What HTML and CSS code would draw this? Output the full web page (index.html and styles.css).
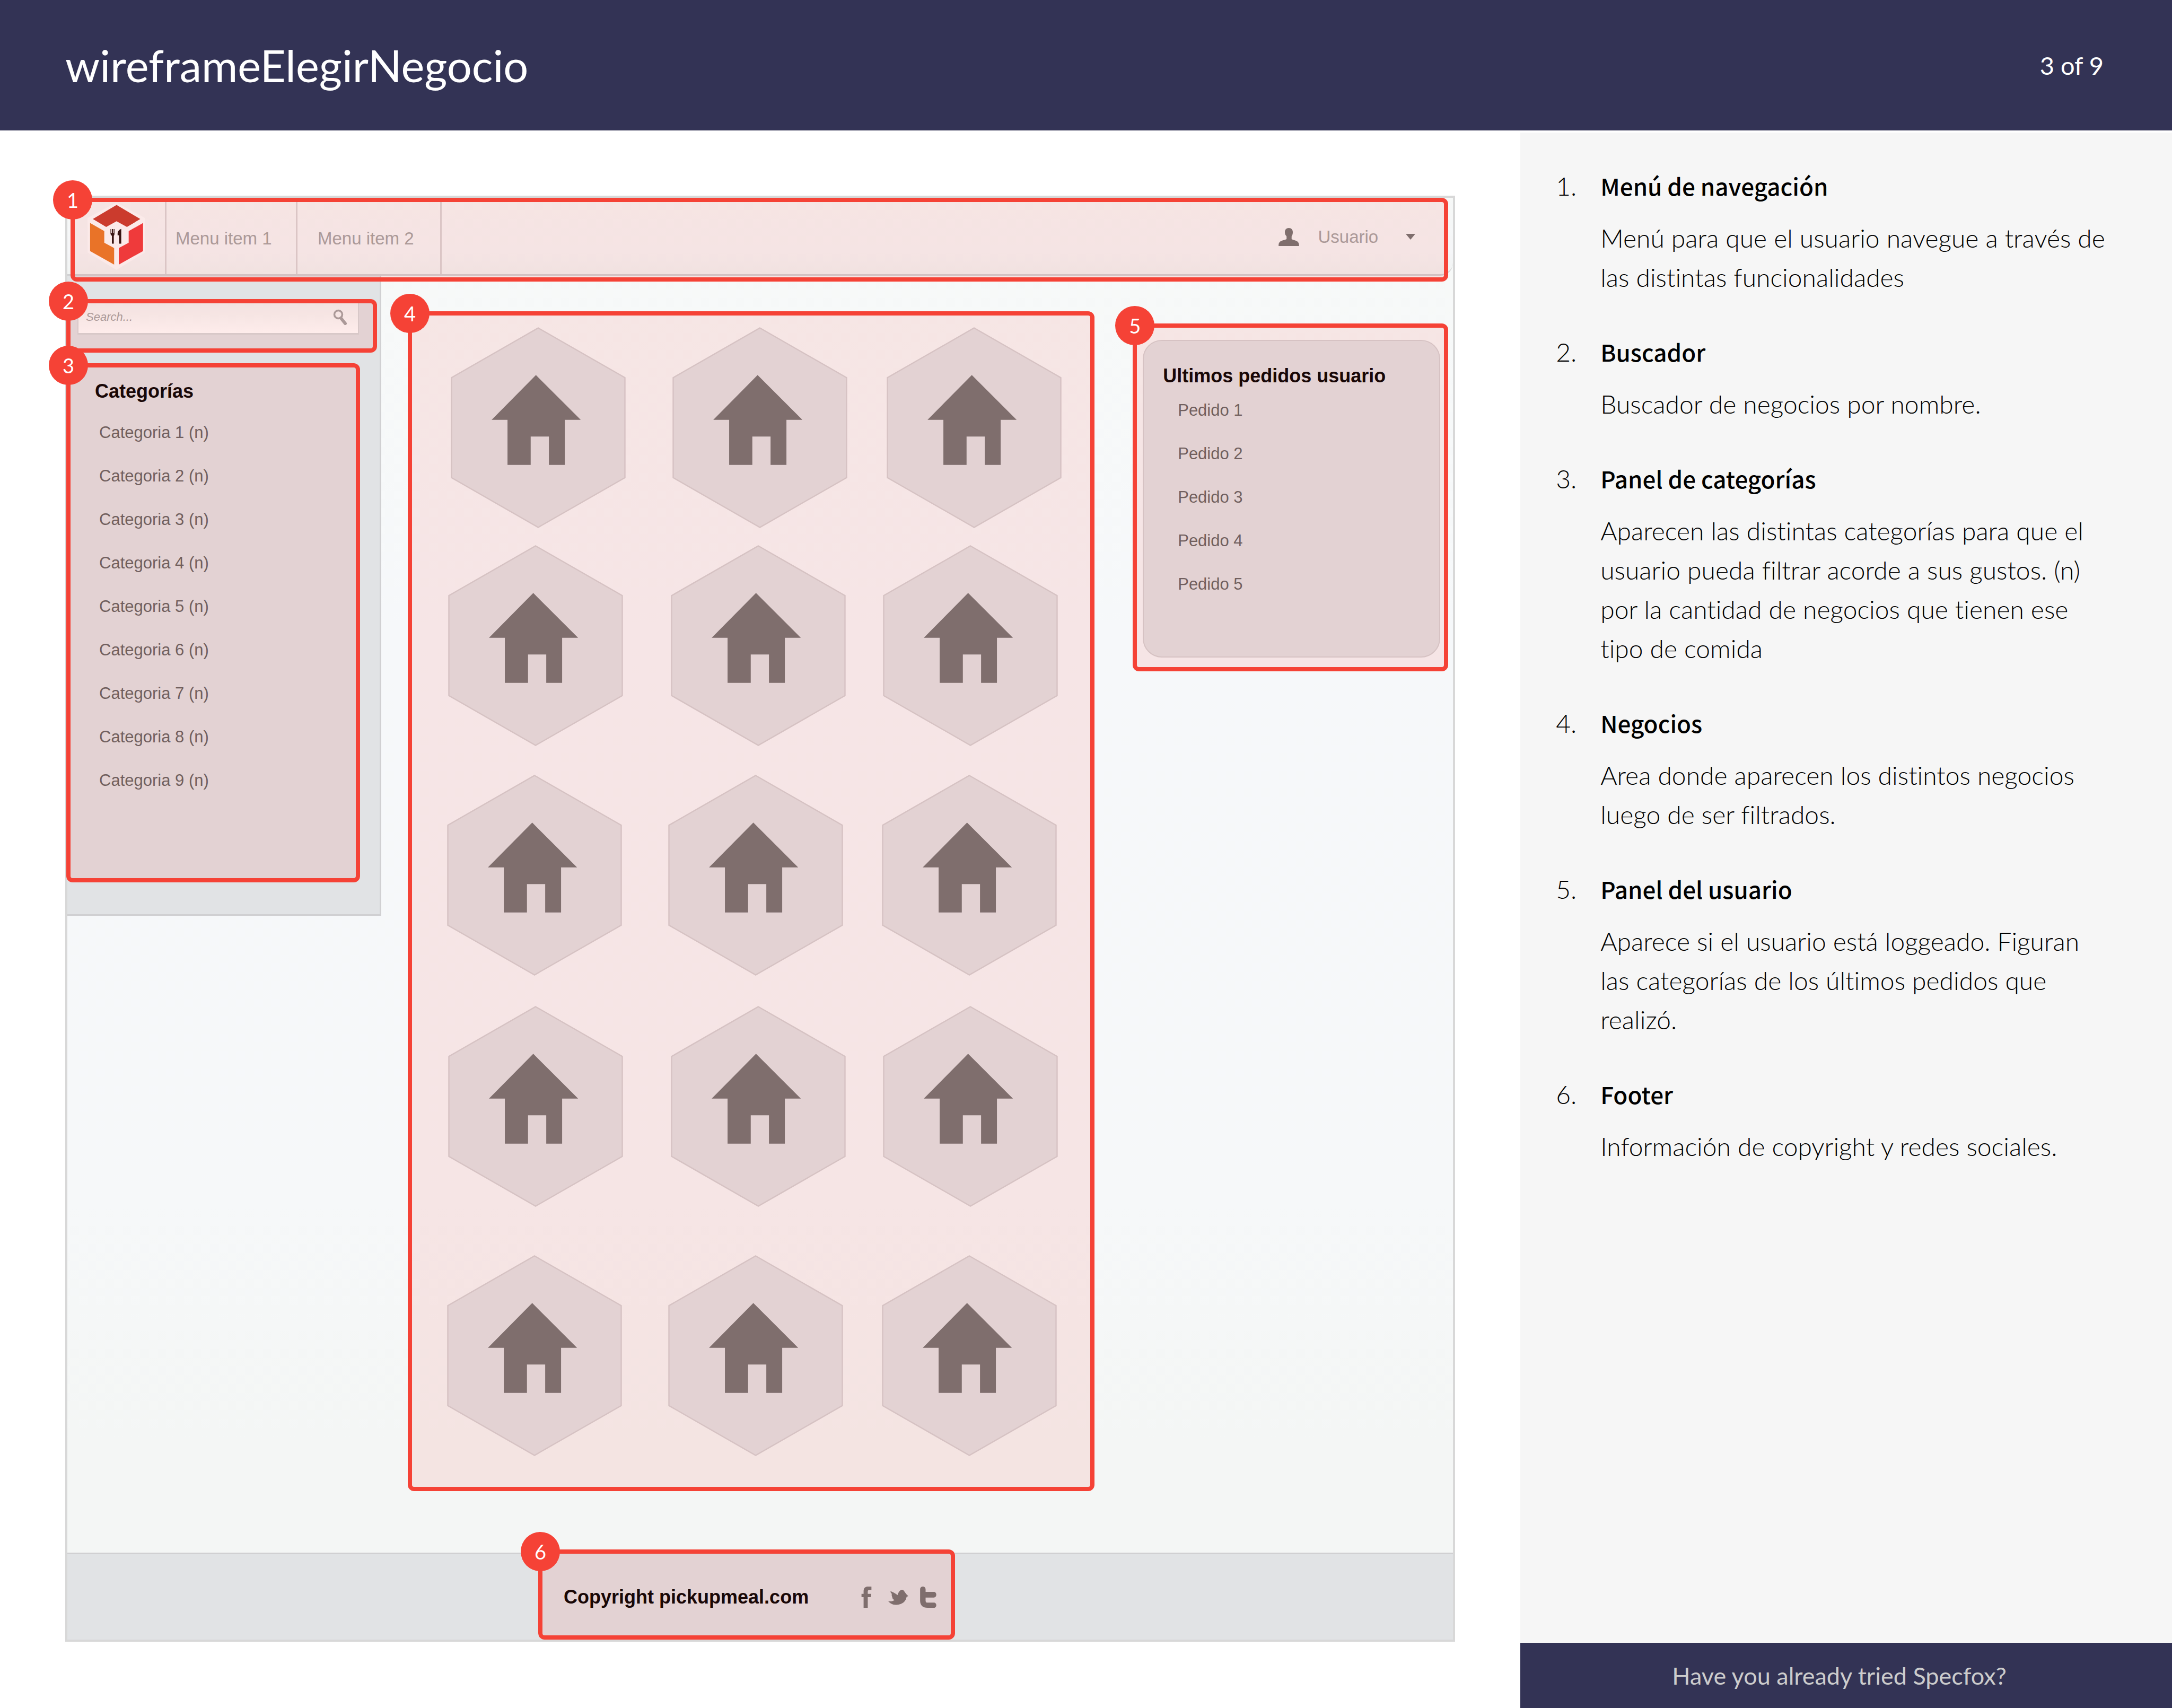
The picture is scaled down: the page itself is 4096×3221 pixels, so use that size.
FILE: index.html
```html
<!DOCTYPE html>
<html lang="es">
<head>
<meta charset="utf-8">
<title>wireframeElegirNegocio</title>
<link rel="stylesheet" href="styles.css">
</head>
<body>
<svg class="defs" aria-hidden="true">
  <symbol id="shop" viewBox="0 0 336 386">
    <path class="shop-hex" d="M168 1.500L334.500 97V289L168 384.500L1.500 289V97Z"/>
    <path class="shop-house" d="M163.600 92L249.700 178H219V264.500H188.500V210H153.500V264.500H109V178H78.500Z"/>
  </symbol>
</svg>
<div class="page">
  <header class="page-header">
    <h1 class="page-title">wireframeElegirNegocio</h1>
    <span class="page-count">3 of 9</span>
  </header>
  <div class="page-body">
    <main class="stage">
      <div class="mock">
        <header class="topbar">
          <a class="topbar-logo" href="#" aria-label="Pickupmeal">
            <svg class="logo" viewBox="0 0 340 395">
              <path fill="#fff" fill-opacity=".7" d="M170 2L334 92V292L170 392L4 292V92Z"/>
              <path fill="#c73a2c" d="M171 17L308 98L231 144L171 111L111 144L34 98Z"/>
              <path fill="#e87926" d="M18 121L100 168V235L157 266V361L18 283Z"/>
              <path fill="#ef393b" d="M324 121L241 168V235L184 266V361L324 283Z"/>
              <path fill="#24100e" d="M136 156h4v22h4v-22h6v22h4v-22h5v28q0 8-4 11v45h-11v-45q-8-4-8-12zM198 155v85h-13v-48h-8v-14q4-18 21-23z"/>
            </svg>
          </a>
          <nav class="topbar-nav">
            <a class="topbar-item" href="#">Menu item 1</a>
            <a class="topbar-item topbar-item--wide" href="#">Menu item 2</a>
          </nav>
          <button class="user" type="button">
            <svg class="user-icon" viewBox="0 0 118 104"><path d="M59 0C74 0 82 10 82 24C82 36 79 42 75 48V64C92 72 118 72 118 98V104H0V98C0 72 26 72 46 64V48C40 42 36 36 36 24C36 10 44 0 59 0Z"/></svg>
            <span>Usuario</span>
            <svg class="user-caret" viewBox="0 0 18 11"><path d="M0 0H18L9 11Z"/></svg>
          </button>
        </header>
        <div class="mock-body">
          <aside class="filters">
            <label class="search">
              <input class="search-input" type="text" placeholder="Search..." aria-label="Search">
              <svg class="search-icon" viewBox="0 0 27 30"><circle cx="10" cy="10" r="7.500" fill="none" stroke-width="3.500"/><path d="M15 17L23 27" fill="none" stroke-width="6" stroke-linecap="round"/></svg>
            </label>
            <h2 class="panel-title filters-title">Categorías</h2>
            <ul class="panel-list filters-list">
              <li>Categoria 1 (n)</li>
              <li>Categoria 2 (n)</li>
              <li>Categoria 3 (n)</li>
              <li>Categoria 4 (n)</li>
              <li>Categoria 5 (n)</li>
              <li>Categoria 6 (n)</li>
              <li>Categoria 7 (n)</li>
              <li>Categoria 8 (n)</li>
              <li>Categoria 9 (n)</li>
            </ul>
          </aside>
          <section class="shops">
            <div class="shop-row shop-row--first">
              <svg class="shop"><use href="#shop"/></svg>
              <svg class="shop"><use href="#shop"/></svg>
              <svg class="shop"><use href="#shop"/></svg>
            </div>
            <div class="shop-row shop-row--even">
              <svg class="shop"><use href="#shop"/></svg>
              <svg class="shop"><use href="#shop"/></svg>
              <svg class="shop"><use href="#shop"/></svg>
            </div>
            <div class="shop-row shop-row--odd">
              <svg class="shop"><use href="#shop"/></svg>
              <svg class="shop"><use href="#shop"/></svg>
              <svg class="shop"><use href="#shop"/></svg>
            </div>
            <div class="shop-row shop-row--even">
              <svg class="shop"><use href="#shop"/></svg>
              <svg class="shop"><use href="#shop"/></svg>
              <svg class="shop"><use href="#shop"/></svg>
            </div>
            <div class="shop-row shop-row--odd">
              <svg class="shop"><use href="#shop"/></svg>
              <svg class="shop"><use href="#shop"/></svg>
              <svg class="shop"><use href="#shop"/></svg>
            </div>
          </section>
          <aside class="orders">
            <h2 class="panel-title">Ultimos pedidos usuario</h2>
            <ul class="panel-list orders-list">
              <li>Pedido 1</li>
              <li>Pedido 2</li>
              <li>Pedido 3</li>
              <li>Pedido 4</li>
              <li>Pedido 5</li>
            </ul>
          </aside>
        </div>
        <footer class="mock-footer">
          <span class="copyright">Copyright pickupmeal.com</span>
          <div class="social">
            <a href="#" aria-label="Facebook"><svg class="social-fb" viewBox="0 0 57 122"><path d="M12 122V61H0V42H12V27C12 8 22 0 38 0H57V19H46C38 19 36 23 36 29V42H56L53 61H36V122Z"/></svg></a>
            <a href="#" aria-label="Twitter"><svg class="social-bird" viewBox="0 0 116 88"><path d="M0 66C14 70 26 68 36 60C26 56 24 50 24 46C20 36 18 28 22 26C14 20 12 12 14 10C28 16 40 22 54 32C58 16 66 4 78 1C86 0 90 6 92 10C98 18 102 26 116 38L106 42C102 66 84 88 46 88C24 88 8 78 0 66Z"/></svg></a>
            <a href="#" aria-label="Tumblr"><svg class="social-t" viewBox="0 0 92 120"><path d="M0 16C0-5 31-5 31 16V30H78C96 30 96 62 78 62H31V80C31 87 35 91 42 91H78C96 91 96 120 78 120H42C16 120 0 106 0 80Z"/></svg></a>
          </div>
        </footer>
        <div class="mark mark--menu"><span class="mark-badge">1</span></div>
        <div class="mark mark--search"><span class="mark-badge">2</span></div>
        <div class="mark mark--categories"><span class="mark-badge">3</span></div>
        <div class="mark mark--shops"><span class="mark-badge">4</span></div>
        <div class="mark mark--orders"><span class="mark-badge">5</span></div>
        <div class="mark mark--footer"><span class="mark-badge">6</span></div>
      </div>
    </main>
    <aside class="notes">
      <ol class="notes-list">
        <li class="note"><span class="note-number">1.</span><h3 class="note-title">Menú de navegación</h3><p class="note-text">Menú para que el usuario navegue a través de las distintas funcionalidades</p></li>
        <li class="note"><span class="note-number">2.</span><h3 class="note-title">Buscador</h3><p class="note-text">Buscador de negocios por nombre.</p></li>
        <li class="note"><span class="note-number">3.</span><h3 class="note-title">Panel de categorías</h3><p class="note-text">Aparecen las distintas categorías para que el usuario pueda filtrar acorde a sus gustos. (n) por la cantidad de negocios que tienen ese tipo de comida</p></li>
        <li class="note"><span class="note-number">4.</span><h3 class="note-title">Negocios</h3><p class="note-text">Area donde aparecen los distintos negocios luego de ser filtrados.</p></li>
        <li class="note"><span class="note-number">5.</span><h3 class="note-title">Panel del usuario</h3><p class="note-text">Aparece si el usuario está loggeado. Figuran las categorías de los últimos pedidos que realizó.</p></li>
        <li class="note"><span class="note-number">6.</span><h3 class="note-title">Footer</h3><p class="note-text">Información de copyright y redes sociales.</p></li>
      </ol>
      <a class="promo" href="#">Have you already tried Specfox?</a>
    </aside>
  </div>
</div>
</body>
</html>
```
FILE: styles.css
```css
*, *::before, *::after { box-sizing: border-box; }
body { margin: 0; background: #fff; font-family: "Lato", sans-serif; color: #000; }
h1, h2, h3, p, ul, ol { margin: 0; padding: 0; font-weight: inherit; }
ul, ol { list-style: none; }
a { color: inherit; text-decoration: none; }
svg { display: block; }
.defs { display: none; }

.page { display: flex; flex-direction: column; min-height: 100vh; }
.page-header {
  display: flex; align-items: center; justify-content: space-between;
  height: 246px; padding: 0 129px 0 123px;
  background: #333355; color: #fff;
}
.page-title { font-size: 83px; line-height: 100px; }
.page-count { font-size: 47px; line-height: 74px; }
.page-body { flex: 1; display: grid; grid-template-columns: minmax(0, 1fr) 30%; }

/* Annotated wireframe */
.stage { display: flex; padding: 123px 123px 125px; }
.mock {
  position: relative; flex: 1; display: flex; flex-direction: column;
  border: 4px solid #d8d8d8;
  background: linear-gradient(#f7f9f8, #f6f8fa 30%, #f6f8f9 70%, #f4f6f5 86%);
  font-family: "Liberation Sans", Arial, sans-serif;
}
.topbar {
  display: flex; height: 147px;
  border-bottom: 3px solid #d0d0d2; border-radius: 0 0 24px 0;
  background: linear-gradient(#f6f8f7, #f5f6f8 70%, #f1f4f3);
}
.topbar-logo { width: 187px; padding: 8px 0 0 37px; border-right: 3px solid #d8d4d5; }
.logo { width: 111px; height: 129px; }
.topbar-nav { display: flex; font-size: 33px; color: #a3a3a3; }
.topbar-item { display: flex; align-items: center; width: 247px; padding: 10px 0 0 17px; border-right: 3px solid #d8d4d5; }
.topbar-item--wide { width: 272px; padding-left: 38px; }
.user {
  display: flex; align-items: center; margin-left: auto; padding: 3px 71px 0 0;
  border: 0; background: none; font: 33px "Liberation Sans", Arial, sans-serif; color: #a3a3a3;
}
.user-icon { width: 39px; height: 34px; margin-right: 35px; fill: #727373; }
.user-caret { width: 18px; height: 11px; margin-left: 52px; fill: #727373; }

.mock-body { flex: 1; display: grid; grid-template-columns: 592px minmax(0, 1fr) 585px; align-items: start; }
.panel-title { font-size: 36px; line-height: 48px; font-weight: 700; }
.panel-list { font-size: 31px; line-height: 82px; color: #636363; }
.filters {
  height: 1207px; padding: 48px 39px 0 19px;
  border: solid #d0d0d2; border-width: 0 3px 3px 0; background: #e1e3e5;
}
.search {
  display: flex; align-items: center; height: 63px; padding: 0 20px 0 14px;
  border: solid #d5d7d8; border-width: 0 2px 3px 2px;
  background: linear-gradient(#f1f3f2, #fff);
}
.search-input { flex: 1; min-width: 0; padding: 0; border: 0; background: none; font: italic 22px "Liberation Sans", Arial, sans-serif; }
.search-input::placeholder { color: #a3a3a3; opacity: 1; }
.search-icon { width: 27px; height: 30px; stroke: #a3a3a3; }
.filters-title { margin: 83px 0 13px 33px; }
.filters-list { padding-left: 41px; }

.shops { padding: 97px 0 0 124px; }
.shop-row { display: grid; }
.shop { width: 330px; height: 379px; }
.shop-hex { fill: #e1e3e5; stroke: #d3d1d3; stroke-width: 2.5; }
.shop-house { fill: #727373; }
.shop-row--first { grid-template-columns: 418px 404px 330px; padding-left: 7px; margin-bottom: 32px; }
.shop-row--even { grid-template-columns: 420px 400px 330px; padding-left: 2px; margin-bottom: 54px; }
.shop-row--odd { grid-template-columns: 417px 403px 330px; margin-bottom: 57px; }
.shop-row--even ~ .shop-row--even { margin-bottom: 91px; }

.orders {
  height: 599px; margin: 121px 24px 0 0; padding: 42px 0 0 36px;
  border: 2px solid #d3d1d3; border-radius: 36px; background: #e1e3e5;
}
.orders-list { padding-left: 28px; }

.mock-footer {
  display: flex; align-items: center; justify-content: center; gap: 99px;
  height: 164px; padding-right: 38px;
  border-top: 3px solid #d0d0d2; background: #e1e3e5;
}
.copyright { font-size: 36px; line-height: 48px; font-weight: 700; }
.social { display: flex; align-items: center; fill: #727373; }
.social-fb { width: 20px; height: 40px; margin-right: 31px; }
.social-bird { width: 38px; height: 30px; margin-right: 22px; }
.social-t { width: 31px; height: 40px; }

/* Numbered marks laid over the wireframe */
.mark { position: absolute; border: 8px solid #f54236; border-radius: 12px; background: rgba(245, 66, 54, .1); }
.mark-badge {
  position: absolute; left: -41px; top: -41px; width: 74px; height: 74px;
  border-radius: 50%; background: #f54236; color: #fff;
  font: 38px/74px "Lato", sans-serif; text-align: center;
}
.mark--menu { left: 6px; right: 9px; top: 0; height: 158px; }
.mark--search { left: -2px; top: 191px; width: 586px; height: 101px; }
.mark--categories { left: -2px; top: 312px; width: 554px; height: 979px; }
.mark--shops { left: 642px; top: 214px; width: 1295px; height: 2225px; }
.mark--orders { right: 9px; top: 237px; width: 595px; height: 656px; }
.mark--footer { left: 888px; bottom: 0; width: 786px; height: 170px; }

/* Notes column */
.notes { display: flex; flex-direction: column; margin-top: 4px; background: #f6f6f6; }
.notes-list { flex: 1; display: flex; flex-direction: column; gap: 66px; padding: 63px 121px 67px 67px; font-size: 48px; line-height: 74px; font-weight: 300; }
.note { display: grid; grid-template-columns: 38px minmax(0, 1fr); column-gap: 46px; row-gap: 24px; align-items: baseline; }
.note-number { text-align: right; }
.note-title { font-family: "Noto Sans CJK SC", "Lato", sans-serif; font-size: 44px; font-weight: 500; }
.note-text { grid-column: 2; font-variant-ligatures: no-common-ligatures; }
.promo {
  display: flex; align-items: center; justify-content: center;
  height: 123px; padding-right: 26px; background: #333355; color: #ccc; font-size: 45px;
}
```
